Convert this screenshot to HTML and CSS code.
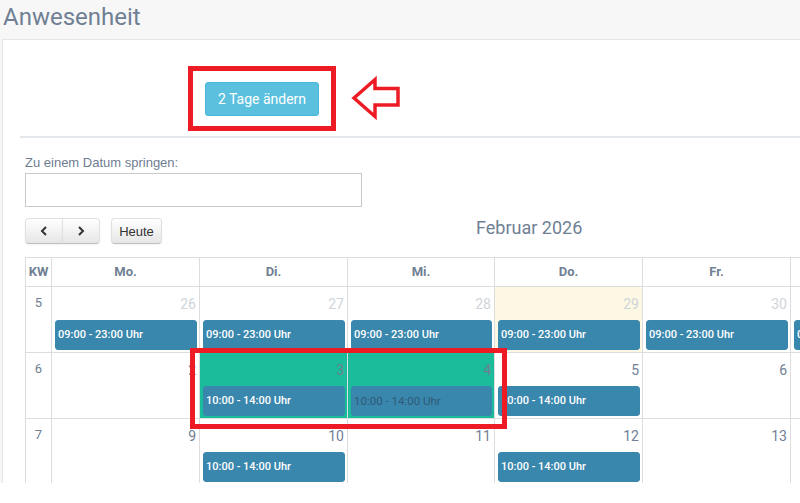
FILE: index.html
```html
<!DOCTYPE html>
<html lang="de">
<head>
<meta charset="utf-8">
<title>Anwesenheit</title>
<link rel="stylesheet" href="styles.css">
</head>
<body>
<div class="page">
  <h1 class="title">Anwesenheit</h1>
  <div class="panel">
    <div class="action-row">
      <button class="btn-info">2 Tage ändern</button>
    </div>
    <div class="sep"></div>
    <div class="jump">
      <label class="jump-label">Zu einem Datum springen:</label>
      <input class="jump-input" type="text">
    </div>
    <div class="cal-toolbar">
      <div class="btn-group">
        <button class="fc-btn fc-btn-left"><svg width="8" height="10" viewBox="0 0 8 10"><path d="M6 1 L2 5 L6 9" fill="none" stroke="#333" stroke-width="2"/></svg></button>
        <button class="fc-btn fc-btn-right"><svg width="8" height="10" viewBox="0 0 8 10"><path d="M2 1 L6 5 L2 9" fill="none" stroke="#333" stroke-width="2"/></svg></button>
      </div>
      <button class="fc-btn fc-today">Heute</button>
      <h2 class="cal-title">Februar 2026</h2>
    </div>
    <div class="cal">
      <div class="hd kw">KW</div>
      <div class="hd">Mo.</div>
      <div class="hd">Di.</div>
      <div class="hd">Mi.</div>
      <div class="hd">Do.</div>
      <div class="hd">Fr.</div>
      <div class="hd">Sa.</div>

      <div class="wk">5</div>
      <div class="day other"><div class="num">26</div><div class="ev">09:00 - 23:00 Uhr</div></div>
      <div class="day other"><div class="num">27</div><div class="ev">09:00 - 23:00 Uhr</div></div>
      <div class="day other"><div class="num">28</div><div class="ev">09:00 - 23:00 Uhr</div></div>
      <div class="day other today"><div class="num">29</div><div class="ev">09:00 - 23:00 Uhr</div></div>
      <div class="day other"><div class="num">30</div><div class="ev">09:00 - 23:00 Uhr</div></div>
      <div class="day other"><div class="num">31</div><div class="ev">09:00 - 23:00 Uhr</div></div>

      <div class="wk">6</div>
      <div class="day"><div class="num">2</div></div>
      <div class="day sel"><div class="num">3</div><div class="ev">10:00 - 14:00 Uhr</div></div>
      <div class="day sel"><div class="num">4</div><div class="ev ev-muted">10:00 - 14:00 Uhr</div></div>
      <div class="day"><div class="num">5</div><div class="ev">10:00 - 14:00 Uhr</div></div>
      <div class="day"><div class="num">6</div></div>
      <div class="day"><div class="num">7</div></div>

      <div class="wk">7</div>
      <div class="day"><div class="num">9</div></div>
      <div class="day"><div class="num">10</div><div class="ev">10:00 - 14:00 Uhr</div></div>
      <div class="day"><div class="num">11</div></div>
      <div class="day"><div class="num">12</div><div class="ev">10:00 - 14:00 Uhr</div></div>
      <div class="day"><div class="num">13</div></div>
      <div class="day"><div class="num">14</div></div>
    </div>
  </div>

  <div class="mark mark-btn"></div>
  <div class="mark mark-days"></div>
  <svg class="mark-arrow" width="800" height="140" viewBox="0 0 800 140">
    <polygon points="354,98 375,79.5 375,88.5 398,88.5 398,105 375,105 375,116.5" fill="none" stroke="#ed1c24" stroke-width="3.5" stroke-linejoin="miter"/>
  </svg>
</div>
</body>
</html>
```

FILE: styles.css
```css
* { box-sizing: border-box; }

body {
  margin: 0;
  background: #ffffff;
  font-family: Roboto, "Liberation Sans", Arial, sans-serif;
}

.page {
  position: relative;
  height: 483px;
  background: #f7f7f7;
  overflow: hidden;
}

.title {
  margin: 0;
  height: 39px;
  padding: 3px 0 0 3px;
  font-size: 24px;
  line-height: 28px;
  font-weight: 400;
  color: #707f94;
}

.panel {
  margin-left: 2px;
  height: 444px;
  background: #ffffff;
  border-top: 1px solid #e6e6e6;
  border-left: 1px solid #e6e7ee;
  overflow: hidden;
}

.action-row {
  height: 96px;
  padding: 42px 0 0 202px;
}

.btn-info {
  display: block;
  width: 114px;
  height: 34px;
  padding: 0;
  border: 1px solid #46b8da;
  border-radius: 3px;
  background: #5bc0de;
  color: #ffffff;
  font-family: Roboto, "Liberation Sans", sans-serif;
  font-size: 14px;
}

.sep {
  margin-left: 17px;
  height: 2px;
  background: #e4e7ec;
}

.jump {
  padding: 17px 0 0 22px;
}

.jump-label {
  display: block;
  height: 18px;
  font-family: "Liberation Sans", Arial, sans-serif;
  font-size: 13px;
  line-height: 16px;
  color: #6e7d91;
}

.jump-input {
  display: block;
  margin-top: 0;
  width: 337px;
  height: 34px;
  border: 1px solid #c9c9c9;
  border-radius: 0;
  background: #fff;
}

.cal-toolbar {
  display: flex;
  align-items: flex-start;
  padding: 11px 0 0 22px;
  height: 50px;
}

.btn-group {
  display: flex;
}

.fc-btn {
  height: 26px;
  margin: 0;
  padding: 0 8px;
  border: 1px solid #e0e0e0;
  border-bottom-color: #bfbfbf;
  background: linear-gradient(#ffffff, #e6e6e6);
  box-shadow: inset 0 1px 0 rgba(255,255,255,.2), 0 1px 2px rgba(0,0,0,.05);
  color: #333;
  font-family: "Liberation Sans", Arial, sans-serif;
  font-size: 13px;
  display: flex;
  align-items: center;
  justify-content: center;
}

.fc-btn-left {
  width: 38px;
  border-radius: 4px 0 0 4px;
}

.fc-btn-right {
  width: 38px;
  margin-left: -1px;
  border-radius: 0 4px 4px 0;
}

.fc-today {
  margin-left: 11px;
  width: 51px;
  border-radius: 4px;
}

.cal-title {
  margin: 0 0 0 314px;
  font-size: 18px;
  font-weight: 400;
  line-height: 20px;
  padding-top: 0;
  color: #707f94;
}

.cal {
  margin-left: 22px;
  display: grid;
  grid-template-columns: 26px 148px 148px 147px 148px 148px 148px;
  grid-template-rows: 29px 66px 66px 66px;
  width: 934px;
  border-top: 1px solid #dddddd;
  border-left: 1px solid #dddddd;
}

.cal > div {
  border-right: 1px solid #dddddd;
  border-bottom: 1px solid #dddddd;
}

.hd {
  font-size: 13px;
  font-weight: 700;
  color: #707f94;
  text-align: center;
  line-height: 27px;
}

.wk {
  text-align: center;
  font-size: 13px;
  color: #707f94;
  padding-top: 8px;
  line-height: 16px;
}

.day {
  padding-top: 8px;
}

.num {
  text-align: right;
  padding-right: 3px;
  font-size: 14px;
  line-height: 18px;
  height: 18px;
  color: #707f94;
}

.day.other .num {
  color: #d0d4da;
}

.day.today {
  background: #fcf8e3;
}

.day.sel {
  background: #1abc9c;
}

.ev {
  margin: 7px 2px 0 3px;
  height: 30px;
  border: 1px solid #3a87ad;
  border-radius: 3px;
  background: #3a87ad;
  color: #ffffff;
  font-size: 11px;
  font-weight: 500;
  line-height: 28px;
  padding-left: 2px;
  white-space: nowrap;
  overflow: hidden;
}

.ev-muted {
  color: #2e5a76;
  font-weight: 400;
  font-size: 11.5px;
}

.mark {
  position: absolute;
  border: 5px solid #ed1c24;
}

.mark-btn {
  left: 188px;
  top: 66px;
  width: 148px;
  height: 65px;
}

.mark-days {
  left: 190px;
  top: 348px;
  width: 317px;
  height: 81px;
}

.mark-arrow {
  position: absolute;
  left: 0;
  top: 0;
}
```
